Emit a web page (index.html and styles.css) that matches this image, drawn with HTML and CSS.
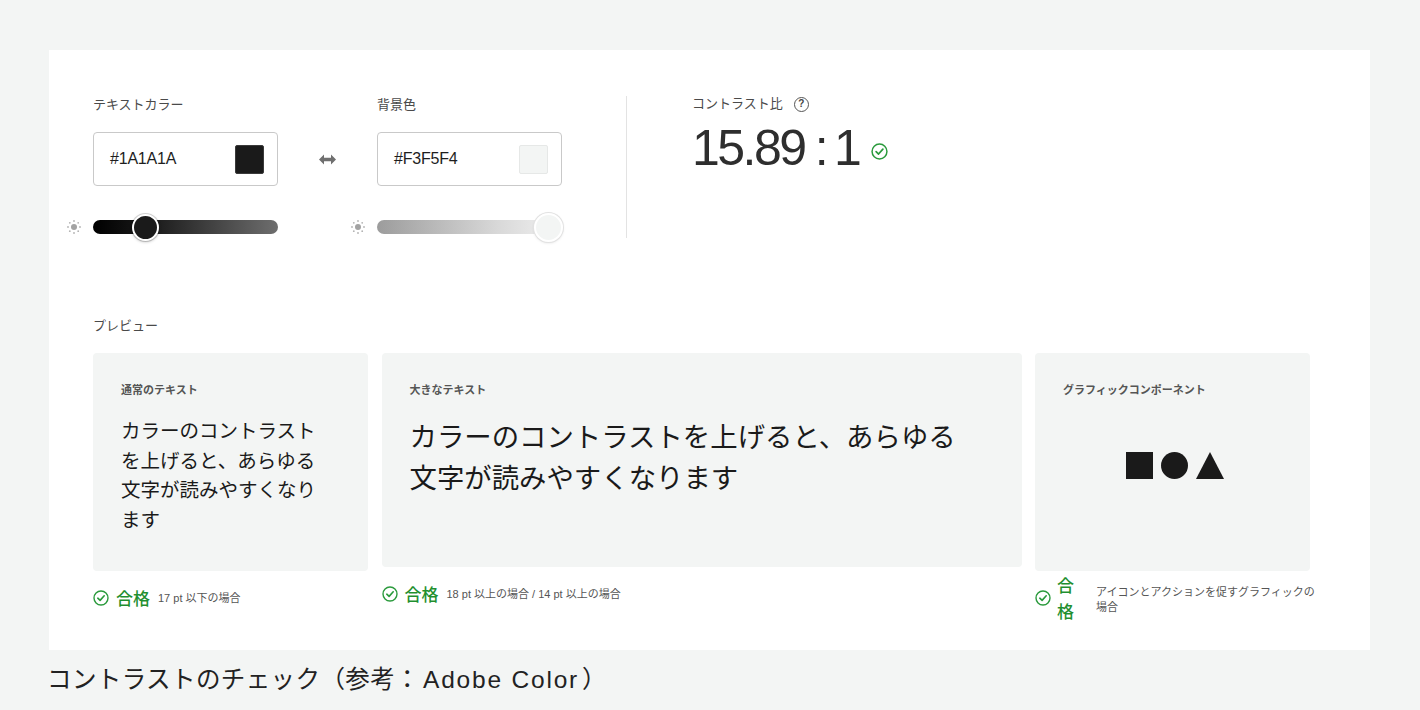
FILE: index.html
```html
<!DOCTYPE html>
<html lang="ja">
<head>
<meta charset="utf-8">
<title>コントラストのチェック</title>
<link rel="stylesheet" href="styles.css">
</head>
<body>
<main class="panel">
  <section class="top">
    <div class="color-col">
      <div class="field-label">テキストカラー</div>
      <div class="input-box">
        <span class="hex">#1A1A1A</span>
        <span class="swatch swatch-dark"></span>
      </div>
      <div class="slider-row">
        <svg class="sun" width="14" height="14" viewBox="0 0 14 14">
          <circle cx="7" cy="7" r="3" fill="#a3a3a3"/>
          <g fill="#b3b3b3">
            <circle cx="7" cy="1" r="0.9"/><circle cx="7" cy="13" r="0.9"/>
            <circle cx="1" cy="7" r="0.9"/><circle cx="13" cy="7" r="0.9"/>
            <circle cx="2.8" cy="2.8" r="0.9"/><circle cx="11.2" cy="2.8" r="0.9"/>
            <circle cx="2.8" cy="11.2" r="0.9"/><circle cx="11.2" cy="11.2" r="0.9"/>
          </g>
        </svg>
        <div class="track track-dark">
          <span class="thumb thumb-dark" style="left:39px"></span>
        </div>
      </div>
    </div>
    <div class="swap">
      <svg width="17" height="11" viewBox="0 0 17 11"><path d="M0 5.5 L5 0.5 V3.8 H12 V0.5 L17 5.5 L12 10.5 V7.2 H5 V10.5 Z" fill="#6f6f6f"/></svg>
    </div>
    <div class="color-col">
      <div class="field-label">背景色</div>
      <div class="input-box">
        <span class="hex">#F3F5F4</span>
        <span class="swatch swatch-light"></span>
      </div>
      <div class="slider-row">
        <svg class="sun" width="14" height="14" viewBox="0 0 14 14">
          <circle cx="7" cy="7" r="3" fill="#a3a3a3"/>
          <g fill="#b3b3b3">
            <circle cx="7" cy="1" r="0.9"/><circle cx="7" cy="13" r="0.9"/>
            <circle cx="1" cy="7" r="0.9"/><circle cx="13" cy="7" r="0.9"/>
            <circle cx="2.8" cy="2.8" r="0.9"/><circle cx="11.2" cy="2.8" r="0.9"/>
            <circle cx="2.8" cy="11.2" r="0.9"/><circle cx="11.2" cy="11.2" r="0.9"/>
          </g>
        </svg>
        <div class="track track-light">
          <span class="thumb thumb-light" style="left:157px"></span>
        </div>
      </div>
    </div>
    <div class="divider"></div>
    <div class="contrast">
      <div class="contrast-label">コントラスト比 <span class="help">?</span></div>
      <div class="ratio-row">
        <span class="ratio">15.89<span class="colon">:</span>1</span>
        <svg class="check ratio-check" width="17" height="17" viewBox="0 0 16 16">
          <circle cx="8" cy="8" r="7" fill="none" stroke="#2a9a3c" stroke-width="1.4"/>
          <path d="M4.8 8.2 L7.1 10.4 L11.2 5.8" fill="none" stroke="#2a9a3c" stroke-width="1.6" stroke-linecap="round" stroke-linejoin="round"/>
        </svg>
      </div>
    </div>
  </section>

  <section class="preview">
    <div class="field-label">プレビュー</div>
    <div class="cards">
      <div class="col">
        <div class="card card-tall">
          <div class="card-title">通常のテキスト</div>
          <p class="sample sample-normal">カラーのコントラストを上げると、あらゆる文字が読みやすくなります</p>
        </div>
        <div class="pass">
          <svg class="check" width="16" height="16" viewBox="0 0 16 16">
            <circle cx="8" cy="8" r="7" fill="none" stroke="#2a9a3c" stroke-width="1.4"/>
            <path d="M4.8 8.2 L7.1 10.4 L11.2 5.8" fill="none" stroke="#2a9a3c" stroke-width="1.6" stroke-linecap="round" stroke-linejoin="round"/>
          </svg>
          <span class="pass-label">合格</span>
          <span class="pass-desc">17 pt 以下の場合</span>
        </div>
      </div>
      <div class="col">
        <div class="card card-short">
          <div class="card-title">大きなテキスト</div>
          <p class="sample sample-large">カラーのコントラストを上げると、あらゆる文字が読みやすくなります</p>
        </div>
        <div class="pass">
          <svg class="check" width="16" height="16" viewBox="0 0 16 16">
            <circle cx="8" cy="8" r="7" fill="none" stroke="#2a9a3c" stroke-width="1.4"/>
            <path d="M4.8 8.2 L7.1 10.4 L11.2 5.8" fill="none" stroke="#2a9a3c" stroke-width="1.6" stroke-linecap="round" stroke-linejoin="round"/>
          </svg>
          <span class="pass-label">合格</span>
          <span class="pass-desc">18 pt 以上の場合 / 14 pt 以上の場合</span>
        </div>
      </div>
      <div class="col">
        <div class="card card-tall">
          <div class="card-title">グラフィックコンポーネント</div>
          <div class="shapes">
            <span class="shape-square"></span>
            <span class="shape-circle"></span>
            <svg width="28" height="27" viewBox="0 0 28 27"><path d="M14 0 L28 27 H0 Z" fill="#1a1a1a"/></svg>
          </div>
        </div>
        <div class="pass">
          <svg class="check" width="16" height="16" viewBox="0 0 16 16">
            <circle cx="8" cy="8" r="7" fill="none" stroke="#2a9a3c" stroke-width="1.4"/>
            <path d="M4.8 8.2 L7.1 10.4 L11.2 5.8" fill="none" stroke="#2a9a3c" stroke-width="1.6" stroke-linecap="round" stroke-linejoin="round"/>
          </svg>
          <span class="pass-label pass-label-narrow">合格</span>
          <span class="pass-desc pass-desc-wrap">アイコンとアクションを促すグラフィックの場合</span>
        </div>
      </div>
    </div>
  </section>
</main>
<p class="caption">コントラストのチェック（参考：<span class="caption-latin">Adobe Color</span>）</p>
</body>
</html>
```

FILE: styles.css
```css
* { box-sizing: border-box; }

body {
  margin: 0;
  background: #f3f5f4;
  font-family: "Liberation Sans", "Noto Sans CJK JP", sans-serif;
  color: #222;
}

.panel {
  margin: 50px 0 0 49px;
  width: 1321px;
  height: 600px;
  background: #fff;
  padding: 46px 0 0 44px;
}

.top {
  display: flex;
  align-items: flex-start;
}

.color-col {
  width: 185px;
}

.field-label {
  font-size: 13px;
  line-height: 18px;
  color: #4a4a4a;
}

.input-box {
  margin-top: 18px;
  height: 54px;
  border: 1px solid #c9c9c9;
  border-radius: 4px;
  display: flex;
  align-items: center;
  justify-content: space-between;
  padding: 0 13px 0 16px;
}

.hex {
  font-size: 16px;
  color: #1e1e1e;
  letter-spacing: -0.2px;
}

.swatch {
  width: 29px;
  height: 29px;
  border-radius: 2px;
}

.swatch-dark {
  background: #1a1a1a;
  border: 1px solid #3a3a3a;
}

.swatch-light {
  background: #f3f5f4;
  border: 1px solid #e6e8e7;
}

.slider-row {
  margin-top: 28px;
  margin-left: -26px;
  height: 26px;
  display: flex;
  align-items: center;
  gap: 11px;
}

.sun {
  flex: none;
}

.track {
  position: relative;
  flex: 1;
  height: 14px;
  border-radius: 7px;
  margin-left: 1px;
}

.track-dark {
  background: linear-gradient(to right, #000 0%, #1e1e1e 35%, #6e6e6e 100%);
}

.track-light {
  background: linear-gradient(to right, #9c9c9c 0%, #d8d8d8 65%, #f2f2f2 100%);
}

.thumb {
  position: absolute;
  top: 50%;
  width: 27px;
  height: 27px;
  margin-top: -13.5px;
  border-radius: 50%;
}

.thumb-dark {
  background: #1a1a1a;
  border: 2px solid #fff;
  box-shadow: 0 0 0 1px rgba(0,0,0,0.15), 0 1px 3px rgba(0,0,0,0.25);
}

.thumb-light {
  width: 29px;
  height: 29px;
  margin-top: -14.5px;
  background: #f3f5f4;
  border: 2px solid #fff;
  box-shadow: 0 0 0 1px #e2e2e2, 0 1px 3px rgba(0,0,0,0.12);
}

.swap {
  width: 99px;
  height: 54px;
  margin-top: 36px;
  display: flex;
  align-items: center;
  justify-content: center;
}

.divider {
  margin-left: 64px;
  width: 1px;
  height: 142px;
  background: #e3e3e3;
}

.contrast {
  margin-left: 65px;
}

.contrast-label {
  font-size: 13px;
  line-height: 16px;
  color: #4a4a4a;
  display: flex;
  align-items: center;
  gap: 11px;
}

.help {
  width: 15px;
  height: 15px;
  border: 1.3px solid #555;
  border-radius: 50%;
  font-size: 10px;
  line-height: 12px;
  text-align: center;
  font-weight: bold;
  color: #444;
  font-family: "Liberation Sans", sans-serif;
}

.ratio-row {
  margin-top: 11px;
  display: flex;
  align-items: center;
}

.ratio {
  font-size: 50px;
  line-height: 50px;
  color: #2e2e2e;
  letter-spacing: -2.5px;
}

.colon {
  margin: 0 8px 0 10px;
}

.ratio-check {
  margin-left: 12px;
  margin-top: 6px;
}

.preview {
  margin-top: 77px;
}

.cards {
  margin-top: 18px;
  display: grid;
  grid-template-columns: 275px 640px 275px;
  column-gap: 13.5px;
  align-items: start;
}

.col {
  display: flex;
  flex-direction: column;
}

.card {
  background: #f3f5f4;
  border-radius: 4px;
  padding: 28px 28px 0 28px;
}

.card-tall { height: 218px; }
.card-short { height: 214px; }

.card-title {
  font-size: 11px;
  line-height: 16px;
  font-weight: bold;
  color: #555;
  font-family: "Noto Sans CJK JP", sans-serif;
}

.sample {
  margin: 0;
  color: #1a1a1a;
  font-family: "Liberation Serif", "Noto Sans CJK JP", serif;
}

.sample-normal {
  margin-top: 20px;
  margin-right: 14px;
  font-size: 19.5px;
  line-height: 29.6px;
}

.sample-large {
  margin-top: 21px;
  max-width: 560px;
  font-size: 27.4px;
  line-height: 41px;
}

.shapes {
  margin-top: 55px;
  display: flex;
  justify-content: center;
  align-items: center;
  gap: 8px;
  padding-left: 5px;
}

.shape-square {
  width: 27px;
  height: 27px;
  background: #1a1a1a;
}

.shape-circle {
  width: 27px;
  height: 27px;
  border-radius: 50%;
  background: #1a1a1a;
}

.pass {
  min-height: 54px;
  display: flex;
  align-items: center;
}

.check {
  flex: none;
}

.pass-label {
  margin-left: 7px;
  font-size: 17px;
  line-height: 26px;
  color: #1f8f2f;
  font-weight: 500;
  font-family: "Noto Sans CJK JP", sans-serif;
}

.pass-label-narrow {
  width: 30px;
  flex: none;
  margin-left: 6px;
}

.pass-desc {
  margin-left: 8px;
  font-size: 11px;
  line-height: 15px;
  color: #555;
}

.pass-desc-wrap {
  flex: none;
  width: 224px;
  margin-left: 9px;
  margin-top: 3px;
}

.caption {
  margin: 14px 0 0 47px;
  font-size: 24.5px;
  line-height: 32px;
  color: #222;
  letter-spacing: 0.4px;
}

.caption-latin {
  letter-spacing: 1.8px;
  margin: 0 3px;
}
```
